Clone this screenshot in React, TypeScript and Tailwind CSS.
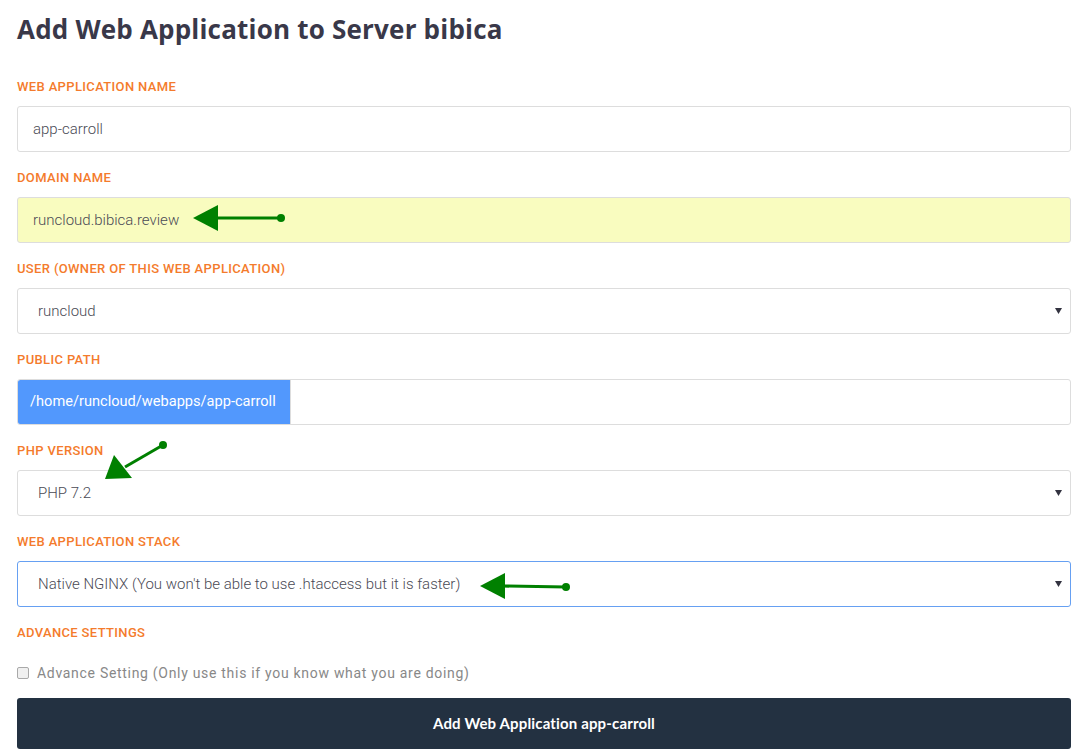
import React from "react";

const label = "block text-[13px] leading-[14px] uppercase tracking-[0.35px] text-[#f47b2c] font-['Roboto',sans-serif] font-medium";
const box = "h-[46px] w-full rounded-[3px] border border-[#dddddd] flex items-center text-[15px] font-light text-[#4a4a55] font-['Roboto',sans-serif]";

function Caret() {
  return (
    <svg width="7" height="6" viewBox="0 0 7 6" className="shrink-0">
      <path d="M0 0 L7 0 L3.5 6 Z" fill="#333340" />
    </svg>
  );
}

function Field({ title, children }: { title: string; children: React.ReactNode }) {
  return (
    <div className="mb-[19px]">
      <label className={label}>{title}</label>
      <div className="mt-[12px]">{children}</div>
    </div>
  );
}

export default function App() {
  return (
    <div className="relative w-[1083px] min-h-[756px] bg-white pl-[17px] pr-[12px] pt-[11px] font-['Roboto',sans-serif]">
      <h1 className="text-[26px] leading-[36px] font-bold tracking-[0.2px] text-[#393849] font-['Open_Sans',sans-serif] mb-[33px]">
        Add Web Application to Server bibica
      </h1>

      <Field title="Web Application Name">
        <div className={`${box} bg-white px-[15px]`}>app-carroll</div>
      </Field>

      <Field title="Domain Name">
        <div className={`${box} bg-[#f9fcbf] px-[15px]`}>runcloud.bibica.review</div>
      </Field>

      <Field title="User (Owner of this web application)">
        <div className={`${box} bg-white pl-[20px] pr-[8px] justify-between`}>
          <span>runcloud</span>
          <Caret />
        </div>
      </Field>

      <Field title="Public Path">
        <div className={`${box} bg-white overflow-hidden`}>
          <div className="h-full w-[273px] bg-[#5298fd] text-white text-[14.6px] font-normal flex items-center pl-[13px] -ml-px -my-px rounded-l-[3px]">
            /home/runcloud/webapps/app-carroll
          </div>
          <div className="h-full flex-1 border-l border-[#dddddd]" />
        </div>
      </Field>

      <Field title="PHP Version">
        <div className={`${box} bg-white pl-[20px] pr-[8px] justify-between`}>
          <span>PHP 7.2</span>
          <Caret />
        </div>
      </Field>

      <Field title="Web Application Stack">
        <div className={`${box} bg-white pl-[20px] pr-[8px] justify-between !border-[#66a0f2]`}>
          <span>Native NGINX (You won't be able to use .htaccess but it is faster)</span>
          <Caret />
        </div>
      </Field>

      <div>
        <label className={label}>Advance Settings</label>
        <div className="mt-[25px] flex items-center gap-[8px] text-[14px] leading-[16px] tracking-[0.7px] text-[#888]">
          <span className="w-[12px] h-[12px] rounded-[2px] border border-[#a9a9a9] bg-[#f0f0f0]" />
          <span>Advance Setting (Only use this if you know what you are doing)</span>
        </div>
      </div>

      <button className="mt-[17px] w-full h-[51px] rounded-[3px] bg-[#233141] text-white text-[15px] tracking-[0.15px] font-bold font-['Lato',sans-serif]">
        Add Web Application app-carroll
      </button>

      {/* annotation arrows */}
      <svg className="absolute inset-0 pointer-events-none" width="1083" height="756">
        <g fill="#008000" stroke="#008000">
          <line x1="215" y1="218" x2="281" y2="218" strokeWidth="3" />
          <circle cx="281" cy="218" r="4" stroke="none" />
          <polygon points="193,218 218,205 218,231" stroke="none" />

          <line x1="125" y1="467" x2="163" y2="445" strokeWidth="3" />
          <circle cx="163" cy="445" r="4" stroke="none" />
          <polygon points="105,479 114,455 132,478" stroke="none" />

          <line x1="502" y1="586" x2="566" y2="587" strokeWidth="3" />
          <circle cx="566" cy="587" r="4" stroke="none" />
          <polygon points="480,586 505,573 505,599" stroke="none" />
        </g>
      </svg>
    </div>
  );
}
